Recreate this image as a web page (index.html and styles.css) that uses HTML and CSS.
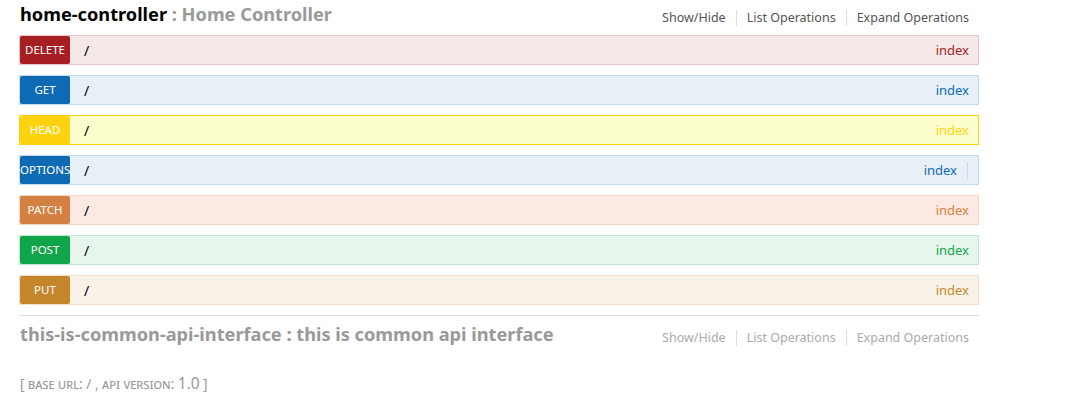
FILE: index.html
```html
<!DOCTYPE html>
<html>
<head>
<meta charset="utf-8">
<link rel="stylesheet" href="styles.css">
</head>
<body>
<div class="wrap">
  <section class="resource active">
    <div class="heading">
      <h2><span class="name">home-controller</span><span class="desc"> : Home Controller</span></h2>
      <ul class="options">
        <li>Show/Hide</li>
        <li>List Operations</li>
        <li>Expand Operations</li>
      </ul>
    </div>
    <ul class="endpoints">
      <li class="op delete"><span class="method">delete</span><span class="path">/</span><span class="summary">index</span></li>
      <li class="op get"><span class="method">get</span><span class="path">/</span><span class="summary">index</span></li>
      <li class="op head"><span class="method">head</span><span class="path">/</span><span class="summary">index</span></li>
      <li class="op options-m"><span class="method">options</span><span class="path">/</span><span class="summary sep">index</span></li>
      <li class="op patch"><span class="method">patch</span><span class="path">/</span><span class="summary">index</span></li>
      <li class="op post"><span class="method">post</span><span class="path">/</span><span class="summary">index</span></li>
      <li class="op put"><span class="method">put</span><span class="path">/</span><span class="summary">index</span></li>
    </ul>
  </section>
  <section class="resource inactive">
    <div class="heading">
      <h2><span class="name">this-is-common-api-interface</span><span class="desc"> : this is common api interface</span></h2>
      <ul class="options">
        <li>Show/Hide</li>
        <li>List Operations</li>
        <li>Expand Operations</li>
      </ul>
    </div>
  </section>
  <div class="footer">[ <span class="sc">base url</span>: / , <span class="sc">api version</span>: <span class="ver">1.0</span> ]</div>
</div>
</body>
</html>
```

FILE: styles.css
```css
html, body {
  margin: 0;
  padding: 0;
  background: #fff;
}
body {
  font-family: "Noto Sans", "Open Sans", sans-serif;
  color: #000;
}
.wrap {
  width: 960px;
  margin-left: 19px;
}
ul {
  list-style: none;
  margin: 0;
  padding: 0;
}
.heading {
  display: flex;
  justify-content: space-between;
  align-items: center;
  height: 32px;
}
.heading h2 {
  margin: 0 0 3px 1px;
  font-size: 18.2px;
  font-weight: bold;
  line-height: 1;
}
.active .name { color: #000; }
.heading .desc { color: #999; }
.inactive .name { color: #999; }
.options {
  display: flex;
  margin-top: 4px;
}
.options li {
  font-size: 12.5px;
  padding: 0 10px;
  border-right: 1px solid #ddd;
  line-height: 16px;
  color: #555;
}
.options li:last-child { border-right: none; }
.inactive .options li { color: #aaa; }
.endpoints {
  padding-top: 3px;
}
.op {
  display: flex;
  align-items: center;
  height: 28px;
  margin-bottom: 10px;
  border: 1px solid;
}
.method {
  width: 50px;
  height: 28px;
  line-height: 28px;
  text-align: center;
  color: #fff;
  font-size: 11.5px;
  text-transform: uppercase;
  border-radius: 2px;
  flex: none;
}
.path {
  margin-left: 14px;
  font-size: 14px;
  flex: 1;
}
.summary {
  font-size: 13px;
  padding-right: 9px;
}
.summary.sep {
  padding-right: 10px;
  margin-right: 10px;
  border-right: 1px solid #c3d9ec;
  line-height: 17px;
}
.delete { background: #f5e8e8; border-color: #e8c6c7; }
.delete .method { background: #a41e22; }
.delete .summary { color: #a41e22; }
.get, .options-m { background: #e7f0f7; border-color: #c3d9ec; }
.get .method, .options-m .method { background: #0f6ab4; }
.get .summary, .options-m .summary { color: #0f6ab4; }
.head { background: #fcffcd; border-color: #ffd20f; }
.head .method { background: #ffd20f; }
.head .summary { color: #ffd20f; }
.patch { background: #fce9e3; border-color: #f5d5c3; }
.patch .method { background: #d38042; }
.patch .summary { color: #d38042; }
.post { background: #e7f6ec; border-color: #c3e8d1; }
.post .method { background: #10a54a; }
.post .summary { color: #10a54a; }
.put { background: #f9f2e9; border-color: #f0e0ca; }
.put .method { background: #c5862b; }
.put .summary { color: #c5862b; }
.inactive {
  border-top: 1px solid #ddd;
  padding-top: 4px;
}
.footer {
  margin-top: 20px;
  margin-left: 1px;
  font-size: 13.6px;
  color: #999;
}
.sc {
  font-variant: small-caps;
}
.ver {
  font-size: 15.5px;
}
```
